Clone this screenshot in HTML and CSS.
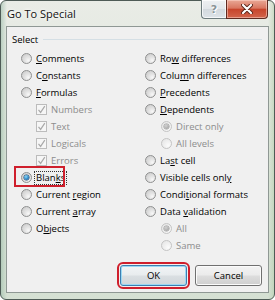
FILE: index.html
```html
<!DOCTYPE html>
<html>
  <head>
    <title>Go To Special</title>
    <meta charset="utf-8">
    <link rel="stylesheet" href="styles.css">
  </head>

  <body>
    <div class="window">

      <div class="titlebar">
        <span class="title">Go To Special</span>
        <div class="caption-btns">
          <span class="cap help">?</span>
          <span class="cap close">
            <svg width="12" height="10" viewBox="0 0 12 10">
              <path d="M2 1 L10 9 M10 1 L2 9" stroke="#5a2418" stroke-width="4" stroke-linecap="round"/>
              <path d="M2 1 L10 9 M10 1 L2 9" stroke="#fff" stroke-width="2.2" stroke-linecap="round"/>
            </svg>
          </span>
        </div>
      </div>

      <div class="client">
        <div class="group-head">
          <span>Select</span>
          <div class="rule"></div>
        </div>

        <div class="cols">
          <div class="col">
            <div class="opt"><span class="radio"></span><span><u>C</u>omments</span></div>
            <div class="opt"><span class="radio"></span><span>C<u>o</u>nstants</span></div>
            <div class="opt"><span class="radio"></span><span><u>F</u>ormulas</span></div>
            <div class="opt sub off"><span class="check"><svg width="9" height="9" viewBox="0 0 9 9"><path d="M1.5 4.8 L3.6 7.4 L7.8 1.2" fill="none" stroke="#a9a9a9" stroke-width="1.2"/></svg></span><span>Numbers</span></div>
            <div class="opt sub off"><span class="check"><svg width="9" height="9" viewBox="0 0 9 9"><path d="M1.5 4.8 L3.6 7.4 L7.8 1.2" fill="none" stroke="#a9a9a9" stroke-width="1.2"/></svg></span><span>Text</span></div>
            <div class="opt sub off"><span class="check"><svg width="9" height="9" viewBox="0 0 9 9"><path d="M1.5 4.8 L3.6 7.4 L7.8 1.2" fill="none" stroke="#a9a9a9" stroke-width="1.2"/></svg></span><span>Logicals</span></div>
            <div class="opt sub off"><span class="check"><svg width="9" height="9" viewBox="0 0 9 9"><path d="M1.5 4.8 L3.6 7.4 L7.8 1.2" fill="none" stroke="#a9a9a9" stroke-width="1.2"/></svg></span><span>Errors</span></div>
            <div class="opt marked"><span class="radio on"></span><span class="focus">Blan<u>k</u>s</span></div>
            <div class="opt"><span class="radio"></span><span>Current <u>r</u>egion</span></div>
            <div class="opt"><span class="radio"></span><span>Current <u>a</u>rray</span></div>
            <div class="opt"><span class="radio"></span><span>O<u>b</u>jects</span></div>
          </div>

          <div class="col">
            <div class="opt"><span class="radio"></span><span>Ro<u>w</u> differences</span></div>
            <div class="opt"><span class="radio"></span><span>Colu<u>m</u>n differences</span></div>
            <div class="opt"><span class="radio"></span><span><u>P</u>recedents</span></div>
            <div class="opt"><span class="radio"></span><span><u>D</u>ependents</span></div>
            <div class="opt sub off"><span class="radio on"></span><span>Direct only</span></div>
            <div class="opt sub off"><span class="radio"></span><span>All levels</span></div>
            <div class="opt"><span class="radio"></span><span>La<u>s</u>t cell</span></div>
            <div class="opt"><span class="radio"></span><span>Visible cells onl<u>y</u></span></div>
            <div class="opt"><span class="radio"></span><span>Condi<u>t</u>ional formats</span></div>
            <div class="opt"><span class="radio"></span><span>Data <u>v</u>alidation</span></div>
            <div class="opt sub off"><span class="radio on"></span><span>All</span></div>
            <div class="opt sub off"><span class="radio"></span><span>Same</span></div>
          </div>
        </div>

        <div class="buttons">
          <button class="btn default">OK</button>
          <button class="btn">Cancel</button>
        </div>
      </div>

    </div>
  </body>
</html>
```

FILE: styles.css
```css
html, body {
  margin: 0;
  overflow: hidden;
}

body {
  width: 275px;
  height: 300px;
  background: #fff;
  font-family: "Open Sans", "Noto Sans", sans-serif;
  font-size: 9.5px;
  color: #000;
}

.window {
  box-sizing: border-box;
  width: 275px;
  height: 300px;
  border: 1px solid #4e5b56;
  border-radius: 6px;
  padding: 0 5px 6px;
  display: flex;
  flex-direction: column;
  background:
    linear-gradient(90deg, rgba(150, 185, 165, 0.55) 0, rgba(255, 255, 255, 0) 6px, rgba(255, 255, 255, 0) 267px, rgba(170, 200, 160, 0.45) 273px),
    linear-gradient(180deg, #e9ece6 0%, #dfe6dc 40%, #d5e0d3 100%);
}

.titlebar {
  height: 25px;
  display: flex;
  justify-content: space-between;
  padding-left: 1px;
}

.title {
  align-self: center;
  font-size: 11px;
  color: #111;
  text-shadow: 0 0 5px #fff, 0 0 3px #fff;
}

.caption-btns {
  display: flex;
  margin-top: -1px;
  margin-right: 1px;
  height: 19px;
}

.cap {
  box-sizing: border-box;
  height: 19px;
  display: flex;
  align-items: center;
  justify-content: center;
  border: 1px solid #6d7b7d;
  border-top: none;
}

.help {
  width: 25px;
  border-right: none;
  border-radius: 0 0 0 4px;
  background: linear-gradient(180deg, #eef0f2 0%, #e2e6ea 50%, #d3d9de 51%, #dde3e8 100%);
  box-shadow: inset 0 0 0 1px rgba(255, 255, 255, 0.7);
  color: #8a9397;
  font-family: "DejaVu Sans", sans-serif;
  font-weight: bold;
  font-size: 11px;
  text-shadow: 0 0 1px #fff, 1px 1px 0 #fff;
}

.close {
  width: 42px;
  border-color: #5f2a20;
  border-radius: 0 0 4px 0;
  background: linear-gradient(180deg, #e9a896 0%, #d97761 45%, #c7452c 52%, #d2654c 100%);
  box-shadow: inset 0 0 0 1px rgba(255, 220, 210, 0.5);
}

.client {
  flex: 1;
  box-sizing: border-box;
  border: 1px solid #8f9894;
  background: #f0f0f0;
  padding: 6px 6px 6px 5px;
  display: flex;
  flex-direction: column;
}

.group-head {
  display: flex;
  align-items: center;
  gap: 5px;
  height: 13px;
  line-height: 13px;
}

.rule {
  flex: 1;
  border-top: 1px solid #d5dfe5;
}

.cols {
  display: grid;
  grid-template-columns: 124px 1fr;
  margin-top: 4px;
  padding-left: 9px;
}

.opt {
  height: 17px;
  display: flex;
  align-items: center;
  gap: 4px;
  white-space: nowrap;
}

.opt.sub {
  padding-left: 15px;
}

.col + .col .opt.sub {
  padding-left: 16px;
}

.opt.off {
  color: #8d8d8d;
}

.radio {
  position: relative;
  flex: none;
  box-sizing: border-box;
  width: 11px;
  height: 11px;
  border-radius: 50%;
  border: 1px solid #8f9090;
  background: radial-gradient(circle at 70% 72%, #f8f8f8 0, #e4e4e4 35%, #c6c6c6 100%);
}

.off .radio {
  border-color: #c4c4c4;
  background: radial-gradient(circle at 70% 72%, #fbfbfb 0, #f1f1f1 40%, #e2e2e2 100%);
}

.radio.on::after {
  content: "";
  position: absolute;
  left: 2px;
  top: 2px;
  width: 5px;
  height: 5px;
  border-radius: 50%;
  background: radial-gradient(circle at 40% 35%, #8adaf9 0, #2f86c4 55%, #1a4f86 100%);
  box-shadow: 0 0 0 0.5px #23476b;
}

.off .radio.on::after {
  background: radial-gradient(circle at 40% 35%, #d2d2d2 0, #a9a9a9 70%);
  box-shadow: 0 0 0 0.5px #9a9a9a;
}

.check {
  flex: none;
  box-sizing: border-box;
  width: 11px;
  height: 11px;
  border: 1px solid #bcbcbc;
  background: #f6f6f6;
  display: flex;
  align-items: center;
  justify-content: center;
}

.marked {
  position: relative;
}

.marked::after {
  content: "";
  position: absolute;
  left: -7px;
  top: -3px;
  width: 51px;
  height: 21px;
  box-sizing: border-box;
  border: 2px solid #cf1f2c;
}

.focus {
  outline: 1px dotted #333;
  padding: 0 1px;
  margin-left: -1px;
  line-height: 12px;
}

.buttons {
  margin-top: auto;
  display: flex;
  justify-content: flex-end;
  gap: 8px;
}

.btn {
  box-sizing: border-box;
  width: 67px;
  height: 21px;
  padding: 0;
  border: 1px solid #707070;
  border-radius: 3px;
  background: linear-gradient(180deg, #f3f3f3 0%, #ebebeb 48%, #dddddd 52%, #cfcfcf 100%);
  box-shadow: inset 0 0 0 1px #fbfbfb;
  font: inherit;
  color: #000;
}

.btn.default {
  border-color: #3c7fb1;
  box-shadow: inset 0 0 0 1px #9ad9f4;
  background: linear-gradient(180deg, #f1f4f6 0%, #e8ecee 48%, #dadfe2 52%, #d0d6da 100%);
  outline: 2px solid #cf1f2c;
  outline-offset: 1px;
}
```
